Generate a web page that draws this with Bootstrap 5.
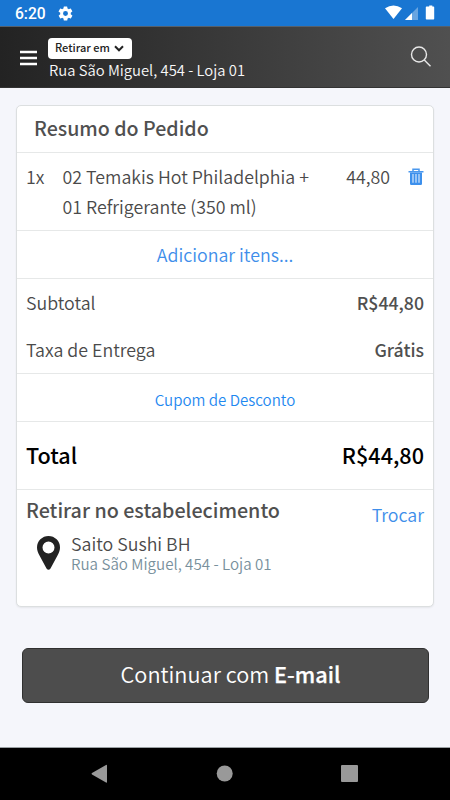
<!DOCTYPE html>
<html lang="pt-BR">
<head>
<meta charset="utf-8">
<meta name="viewport" content="width=device-width, initial-scale=1">
<title>Resumo do Pedido</title>
<link href="https://cdn.jsdelivr.net/npm/bootstrap@5.3.0/dist/css/bootstrap.min.css" rel="stylesheet">
<style>
body{height:800px;overflow:hidden;background:#f5f6fb;color:#4a4a4a;font-family:"Noto Sans CJK SC DemiLight","Noto Sans CJK SC","Noto Sans",sans-serif;font-size:17.8px;font-weight:350;line-height:30px}
svg{display:block;flex:none}
a{color:#3e8eea;text-decoration:none}
.statusbar{height:26px;background:#1976d2;padding:2px 15px 0;font:500 15.6px/24px Roboto,sans-serif;color:#fff}
.gear{margin:-2px 0 0 11px}
.topbar{height:62px;background:linear-gradient(90deg,#232323,#505050);border-top:1px solid #55606c;border-bottom:1px solid #333;padding:10px 19px 0 20px}
.menu{margin:13px 0 0}
.pick{margin:1px 0 0 11px}
.pickup{height:21px;width:84px;border-radius:4px;padding:0 0 2px 7px;font-family:"Noto Sans CJK SC",sans-serif;font-size:11px;font-weight:500;line-height:19px;color:#222;background:#fff;border:0}
.address{margin-left:1px;font-size:14.8px;line-height:22px;color:#f8f8f8}
.search{margin:9px 0 0}
.order{margin:17px 16px 0;height:502px;border:1px solid #dcdfe0;border-radius:5px;box-shadow:0 1px 2px #0001;background:#fff}
.line{border-bottom:1px solid #e6e8e8;padding:0 9px 2px}
.strong{font-family:"Noto Sans CJK SC",sans-serif;font-weight:500;color:#505050}
.fee-value{font-size:17.7px}
.h-title{height:47px;padding-left:17px;font-size:19.6px}
.h-item{height:78px;padding-top:8px}
.h-add{height:48px}
.h-fees{height:95px}
.h-fees>div{height:47px;padding-bottom:2px}
.h-total{height:68px;padding-bottom:1px;font-family:"Noto Sans CJK SC",sans-serif;font-size:21.6px;font-weight:500;color:#000}
.qty{width:36.500px}
.trash{margin:7px 0 0 18px}
.coupon{font-size:15.1px;color:#1e88f0;padding-top:4px}
.store-head{padding:5px 9px 0;height:43px}
.store-title{font-size:19.7px}
.change{padding-top:4px}
.store{padding:0 9px;line-height:20px}
.store-addr{font-size:15.15px;color:#78909c;line-height:20px}
.pin{margin:3px 11px 0 11px}
.continue{width:407px;margin:41px 21px 0 22px;height:55px;background:#4d4d4d;border:1px solid #303030;border-radius:6px;color:#fff;font-size:21.7px;padding:0 0 4px 10px}
.provider{font-family:"Noto Sans CJK SC",sans-serif;font-weight:500;-webkit-text-stroke:.25px #fff}
.navkeys{height:53px;background:#000;border-top:1px solid #9aa0a3}
</style>
<script src="https://cdn.jsdelivr.net/npm/bootstrap@5.3.0/dist/js/bootstrap.bundle.min.js"></script>
</head>
<body class="d-flex flex-column">
<div class="statusbar d-flex align-items-center">
  <span class="me-auto d-flex align-items-center"><span>6:20</span>
    <svg class="gear" width="17" height="17" viewBox="0 0 24 24" fill="#fff"><path d="M19.400 13a7.500 7.500 0 0 0 0-2l2.100-1.650a.5.5 0 0 0 .12-.64l-2-3.460a.5.5 0 0 0-.6-.22l-2.500 1a7.300 7.300 0 0 0-1.700-1l-.37-2.650A.5.5 0 0 0 14 2h-4a.5.5 0 0 0-.5.42l-.37 2.650a7.700 7.700 0 0 0-1.700 1l-2.500-1a.5.5 0 0 0-.6.22l-2 3.460a.5.5 0 0 0 .12.64L4.600 11a8 8 0 0 0 0 2l-2.100 1.650a.5.5 0 0 0-.12.64l2 3.460a.5.5 0 0 0 .6.22l2.500-1a7.300 7.300 0 0 0 1.700 1l.37 2.650a.5.5 0 0 0 .5.420h4a.5.5 0 0 0 .5-.42l.37-2.650a7.700 7.700 0 0 0 1.700-1l2.500 1a.5.5 0 0 0 .6-.22l2-3.460a.5.5 0 0 0-.12-.64zM12 15.500a3.500 3.500 0 1 1 0-7 3.500 3.500 0 0 1 0 7z"/></svg></span>
  <svg class="mb-1" width="50" height="15" viewBox="0 0 50 15" fill="#fff"><path d="M0 3.200Q8.500-2 17 3.200L8.500 14z"/><path d="M33 2v13H20z" opacity=".35"/><path d="M27 8v7h-7z"/><path d="M42 1.500h2.200V.5h3.100v1H48.500q.7 0 .7.700v11.600q0 .7-.7.700h-7q-.7 0-.7-.7V2.200q0-.7.7-.7z"/></svg>
</div>
<header class="topbar d-flex">
  <svg class="menu" width="17" height="16" viewBox="0 0 17 16"><path d="M0 2h17M0 8h17M0 14h17" stroke="#fff" stroke-width="2.600"/></svg>
  <div class="flex-fill pick">
    <button class="pickup d-flex align-items-center">Retirar em<svg class="ms-1" width="10" height="8" viewBox="0 0 10 8"><path d="M1 2.300 5 6.300 9 2.300" fill="none" stroke="#222" stroke-width="2"/></svg></button>
    <div class="address">Rua São Miguel, 454 - Loja 01</div>
  </div>
  <svg class="search" width="21" height="21" viewBox="0 0 21 21" fill="none" stroke="#e8e8e8" stroke-width="1.400"><circle cx="9" cy="8.500" r="7.500"/><path d="m14.300 14 6.200 6.200"/></svg>
</header>
<main class="flex-fill">
  <section class="order">
    <div class="line h-title strong d-flex align-items-center">Resumo do Pedido</div>
    <div class="line h-item d-flex">
      <div class="qty">1x</div>
      <div class="flex-fill">02 Temakis Hot Philadelphia +<br>01 Refrigerante (350 ml)</div>
      <div>44,80</div>
      <svg class="trash" width="16" height="18" viewBox="0 0 16 18"><path d="M5 3V1.300h6V3M.5 3.700h15" fill="none" stroke="#4a98ee" stroke-width="1.500"/><path d="M2 4.500h12v11.300q0 1.200-1.200 1.200H3.200q-1.200 0-1.200-1.200z" fill="#3d90ec"/><path d="M5 6v8.700M8 6v8.700M11 6v8.700" stroke="#d5e8fc" stroke-width="1.200"/></svg>
    </div>
    <div class="line h-add d-flex align-items-center justify-content-center"><a href="#">Adicionar itens...</a></div>
    <div class="line h-fees">
      <div class="d-flex align-items-center justify-content-between"><span>Subtotal</span><span class="strong fee-value">R$44,80</span></div>
      <div class="d-flex align-items-center justify-content-between"><span>Taxa de Entrega</span><span class="strong fee-value">Grátis</span></div>
    </div>
    <div class="line h-add d-flex align-items-center justify-content-center"><a href="#" class="coupon">Cupom de Desconto</a></div>
    <div class="line h-total d-flex align-items-center justify-content-between"><span>Total</span><span>R$44,80</span></div>
    <div class="d-flex justify-content-between store-head"><span class="store-title strong">Retirar no estabelecimento</span><a href="#" class="change">Trocar</a></div>
    <div class="d-flex store">
      <svg class="pin" width="23" height="34" viewBox="0 0 23 34"><path fill="#222" fill-rule="evenodd" d="M11.500 0A11.500 11.500 0 0 0 0 11.500c0 3 1 5 2.500 8L9.500 32.500q2 2.500 4 0l7-13c1.500-3 2.500-5 2.500-8A11.500 11.500 0 0 0 11.500 0zm0 5.500a6 6 0 1 1 0 12 6 6 0 0 1 0-12z"/></svg>
      <div>Saito Sushi BH<div class="store-addr">Rua São Miguel, 454 - Loja 01</div></div>
    </div>
  </section>
  <button class="continue d-flex align-items-center justify-content-center"><span>Continuar com <span class="provider">E-mail</span></span></button>
</main>
<footer class="navkeys d-flex justify-content-center">
  <svg width="450" height="52" viewBox="0 0 450 52" fill="#999"><path d="M106 17q1-.5 1 .5v16.500q0 1-1 .5L92 26.500q-1-.8 0-1.500z"/><circle cx="224.700" cy="25.500" r="8"/><rect x="341" y="17" width="17" height="17" rx="1"/></svg>
</footer>
</body>
</html>
